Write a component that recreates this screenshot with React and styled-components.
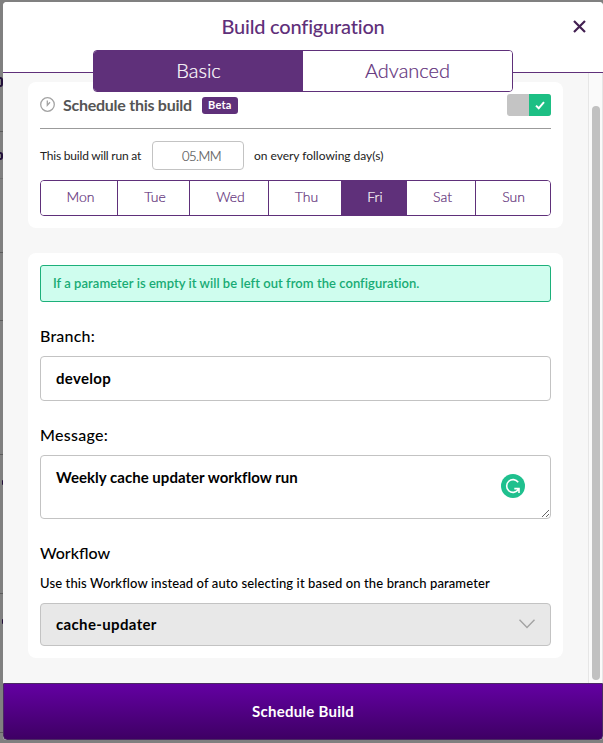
import React, { useState } from "react";
import styled, { createGlobalStyle } from "styled-components";

const PURPLE = "#5f307a";

const GlobalStyle = createGlobalStyle`
  * { box-sizing: border-box; }
  body { margin: 0; background: #808080; font-family: Lato, "Open Sans", sans-serif; color: #000; }
  button, input, textarea { font-family: inherit; margin: 0; }
`;

const Page = styled.main`
  display: grid;
  grid-template-columns: 3px 600px;
  width: 603px;
  height: 743px;
  overflow: hidden;
  background: #808080;
`;

const Backdrop = styled.div`
  display: flex;
  flex-direction: column;
  overflow: hidden;
`;

const BackdropRow = styled.div`
  display: flex;
  flex: none;
  justify-content: flex-end;
  align-items: flex-end;
  height: ${(p) => p.$height}px;
  padding-bottom: ${(p) => p.$rise || 0}px;
  border-bottom: 1px solid ${(p) => (p.$faint ? "#707070" : "#5c5c5c")};
`;

const BackdropMark = styled.span`
  width: ${(p) => (p.$size > 6 ? 3 : 1)}px;
  height: ${(p) => p.$size}px;
  border: solid #23103a;
  border-width: ${(p) => (p.$size > 6 ? "2px 2px 2px 0" : "0 1px 0 0")};
  border-radius: 0 3px 3px 0;
`;

const Modal = styled.section`
  display: flex;
  flex-direction: column;
  height: 738px;
  margin-top: 2px;
  border-radius: 4px;
  background: #f7f7f7;
`;

const Header = styled.header`
  display: grid;
  grid-template-columns: 90px 420px 90px;
  grid-template-rows: 48px 42px;
  flex: none;
  height: 71px;
  border-bottom: 1px solid ${PURPLE};
  border-radius: 4px 4px 0 0;
  background: #fff;
  z-index: 1;
`;

const Title = styled.h1`
  grid-column: 2;
  margin: 0;
  padding-top: 9px;
  text-align: center;
  color: ${PURPLE};
  font-size: 20px;
  font-weight: 500;
  line-height: 30px;
  letter-spacing: -0.2px;
`;

const CloseButton = styled.button`
  display: flex;
  justify-content: flex-end;
  align-items: flex-start;
  padding: 18px 17px 0 0;
  border: 0;
  background: none;
`;

const Tabs = styled.nav`
  grid-column: 2;
  display: grid;
  grid-template-columns: 1fr 1fr;
  overflow: hidden;
  border: 1px solid ${PURPLE};
  border-radius: 4px;
  background: #fff;
`;

const Tab = styled.button`
  padding: 0 0 2px;
  border: 0;
  background: ${(p) => (p.$active ? PURPLE : "#fff")};
  color: ${(p) => (p.$active ? "#fff" : PURPLE)};
  font-size: 20px;
  font-weight: 300;
  line-height: 38px;
  -webkit-text-stroke: 0.2px currentColor;
`;

const Body = styled.div`
  display: flex;
  height: 610px;
  flex: none;
`;

const Content = styled.div`
  display: flex;
  flex-direction: column;
  gap: 25px;
  width: 585px;
  padding: 9px 25px 25px;
`;

const ScrollTrack = styled.div`
  width: 15px;
  padding: 33px 2px 3px 3px;
  border: solid #e6e6e6;
  border-width: 0 1px;
  background: #fafafa;
`;

const ScrollThumb = styled.div`
  width: 8px;
  height: 574px;
  border-radius: 4px;
  background: #c1c1c1;
`;

const Card = styled.section`
  display: flex;
  flex-direction: column;
  height: ${(p) => p.$height}px;
  padding: ${(p) => (p.$flush ? "0 12px 12px" : "12px")};
  border-radius: 8px;
  background: #fff;
`;

const ScheduleHead = styled.div`
  display: flex;
  align-items: center;
  height: 47px;
  border-bottom: 1px solid #9b9b9b;
`;

const ScheduleTitle = styled.h2`
  margin: 0 10px 1px 7px;
  color: #555;
  font-size: 16px;
  font-weight: 700;
  line-height: 20px;
  letter-spacing: -0.26px;
`;

const Badge = styled.span`
  width: 36px;
  height: 17px;
  border-radius: 3px;
  background: ${PURPLE};
  color: #fff;
  text-align: center;
  font-size: 11px;
  font-weight: 700;
  line-height: 16px;
  letter-spacing: 0.2px;
`;

const Toggle = styled.button`
  display: flex;
  justify-content: flex-end;
  width: 44px;
  height: 22px;
  margin-left: auto;
  padding: 0;
  overflow: hidden;
  border: 0;
  border-radius: 3px;
  background: #c4c4c4;
`;

const ToggleKnob = styled.span`
  display: flex;
  align-items: center;
  justify-content: center;
  width: 22px;
  height: 22px;
  background: #1dbf84;
`;

const TimeRow = styled.div`
  display: flex;
  align-items: center;
  gap: 10px;
  height: 29px;
  margin: 12px 0 10px;
  color: #222;
  font-size: 12px;
  line-height: 16px;
`;

const TimeText = styled.span`
  width: ${(p) => p.$width}px;
  white-space: nowrap;
  letter-spacing: ${(p) => p.$spacing}px;
`;

const TimeInput = styled.input`
  width: 92px;
  height: 29px;
  padding: 0 0 0 7px;
  border: 1px solid #c3c3c3;
  border-radius: 4px;
  background: #fff;
  color: #555;
  outline: 0;
  text-align: center;
  font-size: 13px;
  font-weight: 300;
  letter-spacing: -0.5px;
  -webkit-text-stroke: 0.2px currentColor;
`;

const Days = styled.div`
  display: grid;
  grid-template-columns: 77px 72px 79px 72px 66px 69px 74px;
  height: 36px;
  overflow: hidden;
  border: 1px solid ${PURPLE};
  border-radius: 4px;
`;

const Day = styled.button`
  padding: 0 0 3px ${(p) => (p.$last ? 1 : 3)}px;
  border: 0;
  border-right: ${(p) => (p.$last || p.$beforeActive ? "0" : `1px solid ${PURPLE}`)};
  background: ${(p) => (p.$active ? PURPLE : "#fff")};
  color: ${(p) => (p.$active ? "#fff" : PURPLE)};
  font-size: 14px;
  font-weight: 300;
  -webkit-text-stroke: 0.2px currentColor;
`;

const Notice = styled.p`
  flex: none;
  height: 37px;
  margin: 0;
  padding: 0 12px;
  border: 1px solid #1cb07a;
  border-radius: 3px;
  background: #cffdee;
  color: #18ab74;
  font-size: 13px;
  font-weight: 600;
  line-height: 35px;
  letter-spacing: 0.04px;
  white-space: nowrap;
`;

const Label = styled.label`
  margin: 24px 0 ${(p) => p.$gap || 10}px;
  font-size: 16px;
  font-weight: 500;
  line-height: 20px;
  letter-spacing: ${(p) => p.$spacing || 0}px;
`;

const Hint = styled.p`
  margin: 0 0 12px;
  font-size: 13px;
  font-weight: 500;
  line-height: 16px;
  letter-spacing: 0.115px;
  white-space: nowrap;
`;

const TextInput = styled.input`
  flex: none;
  height: 45px;
  padding: 0 15px 2px;
  border: 1px solid #c3c3c3;
  border-radius: 4px;
  outline: 0;
  font-size: 15px;
  font-weight: 700;
  letter-spacing: 0.3px;
`;

const MessageBox = styled.div`
  position: relative;
  display: flex;
  flex: none;
  height: 64px;
`;

const MessageInput = styled.textarea`
  width: 100%;
  height: 64px;
  padding: 11px 15px;
  border: 1px solid #c3c3c3;
  border-radius: 4px;
  outline: 0;
  resize: vertical;
  font-size: 15px;
  font-weight: 700;
  line-height: 20px;
  letter-spacing: 0.03px;
`;

const AssistantBadge = styled.span`
  position: absolute;
  top: 19px;
  right: 26px;
  display: flex;
`;

const Select = styled.button`
  display: flex;
  align-items: center;
  justify-content: space-between;
  height: 43px;
  padding: 0 15px 1px;
  border: 1px solid #c3c3c3;
  border-radius: 4px;
  background: #e8e8e8;
  color: #000;
  font-size: 15px;
  font-weight: 700;
  letter-spacing: 0.35px;
`;

const SubmitButton = styled.button`
  height: 57px;
  padding: 0 0 2px;
  border: 1px solid #4a2a63;
  border-radius: 0 0 4px 4px;
  background: linear-gradient(#6300a2, #3e0064);
  color: #fff;
  font-size: 15px;
  font-weight: 700;
  letter-spacing: 0.25px;
`;

const CloseIcon = () => (
  <svg width="13" height="13" viewBox="0 0 13 13" fill="none" stroke="#432052" strokeWidth="2.2">
    <path d="M1 1l11 11M12 1L1 12" />
  </svg>
);

const ClockIcon = () => (
  <svg width="16" height="16" viewBox="0 0 16 16" fill="none" stroke="#a3a3a3" strokeWidth="1.3">
    <circle cx="7.5" cy="7.5" r="6.8" />
    <path d="M7.3 3.4v4.9L10 5.2" />
  </svg>
);

const CheckIcon = () => (
  <svg width="10" height="9" viewBox="0 0 10 9" fill="none" stroke="#fff" strokeWidth="2">
    <path d="M1 4.6L3.7 7.3L9 1.2" />
  </svg>
);

const AssistantIcon = () => (
  <svg width="24" height="24" viewBox="0 0 24 24">
    <circle cx="12" cy="12" r="12" fill="#1fc08e" />
    <path
      d="M17.2 8.2A6.4 6.4 0 1 0 17.2 15.8M13.3 14.6H18v4.3"
      fill="none"
      stroke="#fff"
      strokeWidth="1.6"
    />
  </svg>
);

const ChevronIcon = () => (
  <svg width="16" height="10" viewBox="0 0 16 10" fill="none" stroke="#a3a3a3" strokeWidth="1.4">
    <path d="M.5.8L8 8.5L15.5.8" />
  </svg>
);

const backdropRows = [
  { height: 132, rise: 44, mark: 10 },
  { height: 47, rise: 18, mark: 8, faint: true },
  { height: 74 },
  { height: 68 },
  { height: 134 },
  { height: 139, rise: 108, mark: 5 },
  { height: 139, rise: 108, mark: 5 },
];

const dayNames = ["Mon", "Tue", "Wed", "Thu", "Fri", "Sat", "Sun"];

export default function App() {
  const [tab, setTab] = useState("Basic");
  const [day, setDay] = useState("Fri");

  return (
    <Page>
      <GlobalStyle />
      <Backdrop aria-hidden="true">
        {backdropRows.map((row, i) => (
          <BackdropRow key={i} $height={row.height} $rise={row.rise} $faint={row.faint}>
            {row.mark && <BackdropMark $size={row.mark} />}
          </BackdropRow>
        ))}
      </Backdrop>
      <Modal>
        <Header>
          <Title>Build configuration</Title>
          <CloseButton aria-label="Close">
            <CloseIcon />
          </CloseButton>
          <Tabs>
            {["Basic", "Advanced"].map((name) => (
              <Tab key={name} $active={tab === name} onClick={() => setTab(name)}>
                {name}
              </Tab>
            ))}
          </Tabs>
        </Header>
        <Body>
          <Content>
            <Card $height={146} $flush>
              <ScheduleHead>
                <ClockIcon />
                <ScheduleTitle>Schedule this build</ScheduleTitle>
                <Badge>Beta</Badge>
                <Toggle aria-label="Schedule this build">
                  <ToggleKnob>
                    <CheckIcon />
                  </ToggleKnob>
                </Toggle>
              </ScheduleHead>
              <TimeRow>
                <TimeText $width={102} $spacing={-0.2}>This build will run at</TimeText>
                <TimeInput defaultValue="05.MM" aria-label="Time" />
                <TimeText $width={131} $spacing={-0.02}>on every following day(s)</TimeText>
              </TimeRow>
              <Days>
                {dayNames.map((name, i) => (
                  <Day
                    key={name}
                    $active={day === name}
                    $beforeActive={dayNames[i + 1] === day}
                    $last={i === dayNames.length - 1}
                    onClick={() => setDay(name)}
                  >
                    {name}
                  </Day>
                ))}
              </Days>
            </Card>
            <Card $height={405}>
              <Notice>If a parameter is empty it will be left out from the configuration.</Notice>
              <Label $spacing={0.2}>Branch:</Label>
              <TextInput defaultValue="develop" spellCheck={false} />
              <Label $spacing={0.28}>Message:</Label>
              <MessageBox>
                <MessageInput defaultValue="Weekly cache updater workflow run" spellCheck={false} />
                <AssistantBadge>
                  <AssistantIcon />
                </AssistantBadge>
              </MessageBox>
              <Label $gap={12}>Workflow</Label>
              <Hint>Use this Workflow instead of auto selecting it based on the branch parameter</Hint>
              <Select>
                cache-updater
                <ChevronIcon />
              </Select>
            </Card>
          </Content>
          <ScrollTrack>
            <ScrollThumb />
          </ScrollTrack>
        </Body>
        <SubmitButton>Schedule Build</SubmitButton>
      </Modal>
    </Page>
  );
}
